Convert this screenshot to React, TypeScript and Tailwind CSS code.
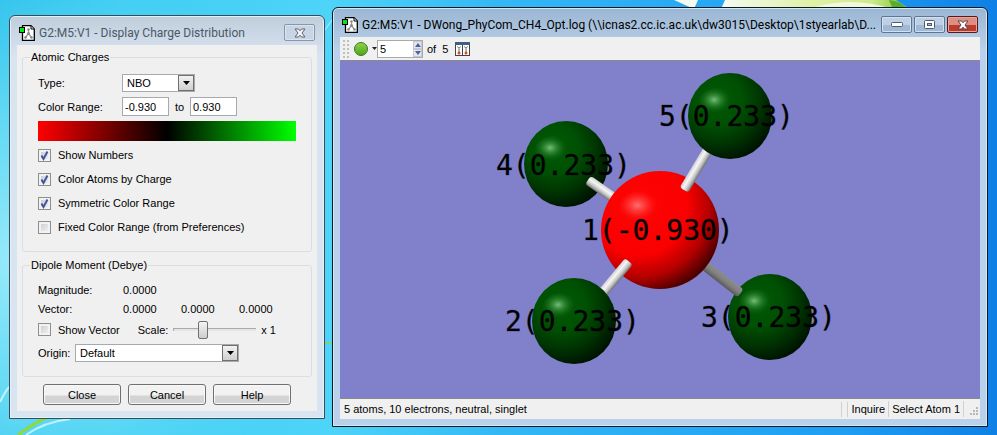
import { useState } from "react";
import type { ReactNode } from "react";

const CHECKS = [
  { id: "show-numbers", label: "Show Numbers", checked: true },
  { id: "color-atoms", label: "Color Atoms by Charge", checked: true },
  { id: "symmetric", label: "Symmetric Color Range", checked: true },
  { id: "fixed", label: "Fixed Color Range (from Preferences)", checked: false },
];

const LABELS = [
  { text: "5(0.233)", x: 319, y: 65 },
  { text: "4(0.233)", x: 156, y: 114 },
  { text: "1(-0.930)", x: 242, y: 179 },
  { text: "2(0.233)", x: 165, y: 270 },
  { text: "3(0.233)", x: 361, y: 266 },
];

function Wallpaper() {
  return (
    <svg className="absolute inset-0 h-full w-full" viewBox="0 0 997 435" preserveAspectRatio="none" aria-hidden="true">
      <defs>
        <linearGradient id="sky" x1="0" y1="0" x2="1" y2="0">
          <stop offset="0" stopColor="#2cc0ea" />
          <stop offset="0.12" stopColor="#3fcdf2" />
          <stop offset="0.33" stopColor="#4ed4f8" />
          <stop offset="0.5" stopColor="#33b8f5" />
          <stop offset="0.85" stopColor="#1e9df3" />
          <stop offset="1" stopColor="#0f80e6" />
        </linearGradient>
        <radialGradient id="glow" gradientUnits="userSpaceOnUse" cx="20" cy="260" r="310">
          <stop offset="0" stopColor="#a5f0fb" stopOpacity="0.9" />
          <stop offset="0.5" stopColor="#7fe6fa" stopOpacity="0.6" />
          <stop offset="1" stopColor="#5cd8fa" stopOpacity="0" />
        </radialGradient>
        <linearGradient id="leaf" x1="0" y1="0" x2="1" y2="0">
          <stop offset="0" stopColor="#f4fbf2" />
          <stop offset="0.5" stopColor="#dff0a4" />
          <stop offset="0.8" stopColor="#cfe98c" />
          <stop offset="1" stopColor="#6fbf2e" />
        </linearGradient>
      </defs>
      <rect width="997" height="435" fill="url(#sky)" />
      <rect width="997" height="435" fill="url(#glow)" />
      <path d="M674 0h24l-4 9z" fill="#f4faf0" />
      <path d="M725 0H896l14 9H721z" fill="url(#leaf)" />
      <path d="M808 9q42-14 84 0z" fill="#f1f8dc" />
      <path d="M889 0q12 1 18 9h-14z" fill="#58ad2d" />
      <path d="M322 34q10-14 17-24" stroke="#b4f0fc" fill="none" />
      <path d="M0 402q6-12 10-16M26 435q18-13 44-16" stroke="#bdf4fb" strokeWidth="2" fill="none" />
      <path d="M18 435q16-12 30-18" stroke="#8ed840" strokeWidth="3" fill="none" />
      <path d="M324 343h9" stroke="#7cd08a" strokeWidth="2" />
    </svg>
  );
}

function AppIcon() {
  return (
    <svg className="size-4 shrink-0" viewBox="0 0 16 16" aria-hidden="true">
      <path d="M3.500.700h8.500l3.300 3.300v11.300H3.500z" fill="#fff" stroke="#000" strokeWidth="1.300" />
      <path d="M12 1v3h3" fill="#fff" stroke="#000" />
      <path d="M9.500 4v4.500L6.500 12.500M9.500 8.500l3 4" stroke="#9a9a9a" strokeWidth="1.300" fill="none" />
      <circle cx="9.500" cy="4.500" r="1.200" fill="#888" />
      <circle cx="9.500" cy="8.500" r="1.500" fill="#888" />
      <circle cx="6.500" cy="12.500" r="1.300" fill="#888" />
      <circle cx="12.500" cy="12.500" r="1.300" fill="#888" />
      <rect x="0.500" y="2.500" width="5" height="5" fill="#00e810" stroke="#000" />
    </svg>
  );
}

function CloseGlyph({ fill, stroke }: { fill: string; stroke: string }) {
  return (
    <svg className="h-[10px] w-3" viewBox="0 0 12 10" aria-hidden="true">
      <path
        d="M1 1h3.500L6 2.800 7.500 1H11L8 5l3 4H7.500L6 7.200 4.500 9H1l3-4z"
        fill={fill}
        stroke={stroke}
        strokeLinejoin="round"
      />
    </svg>
  );
}

function Check({ id, label, checked }: { id: string; label: string; checked: boolean }) {
  return (
    <div className="flex items-center gap-[7px]">
      <span className="relative size-[13px] shrink-0">
        <input
          id={id}
          type="checkbox"
          defaultChecked={checked}
          className="peer block size-[13px] appearance-none border border-[#8e8f8f] bg-linear-to-br from-[#c4c9d0] to-[#f6f6f6] shadow-[inset_0_0_0_2px_#f2f2f2]"
        />
        <svg className="pointer-events-none absolute inset-0 hidden peer-checked:block" viewBox="0 0 13 13" aria-hidden="true">
          <path d="M3.500 6.500l2 3.500 4-7.500" stroke="#43549b" strokeWidth="2" fill="none" />
        </svg>
      </span>
      <label htmlFor={id}>{label}</label>
    </div>
  );
}

function Combo({ id, options, className }: { id: string; options: string[]; className: string }) {
  return (
    <div className={`relative h-[18px] border border-[#a5a9b0] bg-white ${className}`}>
      <select id={id} className="block h-4 w-full appearance-none bg-white pr-4 pl-1 leading-4 outline-none">
        {options.map((o) => (
          <option key={o}>{o}</option>
        ))}
      </select>
      <span className="pointer-events-none absolute inset-y-0 right-0 flex w-4 items-center justify-center border border-[#707070] bg-linear-to-b from-[#f2f2f2] to-[#cfcfcf]">
        <svg className="h-1 w-[7px]" viewBox="0 0 7 4" aria-hidden="true">
          <path d="M0 0h7L3.500 4z" fill="#000" />
        </svg>
      </span>
    </div>
  );
}

function Group({ title, className, children }: { title: string; className: string; children: ReactNode }) {
  return (
    <fieldset className={`rounded-[3px] border border-[#d5dfe5] pr-[15px] pl-[15px] ${className}`}>
      <legend className="-ml-2 px-[1px] leading-4">{title}</legend>
      {children}
    </fieldset>
  );
}

function ChargeDialog() {
  return (
    <section className="mt-2 w-[316px] shrink-0 self-start rounded-t-md border border-[#3c4a57] bg-linear-to-b from-[#bfcddb] to-[#d9e4f1] to-10% px-[7px] pb-[7px] shadow-[inset_0_0_0_1px_#e6f0f8]">
      <header className="flex h-[29px] items-center gap-1 pt-1 pl-[2px]">
        <AppIcon />
        <h1 className="flex-1 truncate font-[Roboto,sans-serif] text-[12px] text-[#4b5868]">
          G2:M5:V1 - Display Charge Distribution
        </h1>
        <button
          aria-label="Close window"
          className="mr-[2px] flex h-[17px] w-[31px] items-center justify-center rounded-[2px] border border-[#8796ab] bg-[#c8d5e4] shadow-[inset_0_0_0_1px_#dbe5ef]"
        >
          <CloseGlyph fill="#f4f4f4" stroke="#5c6371" />
        </button>
      </header>

      <div className="bg-[#f0f0f0] px-[5px] pt-1 pb-[6px]">
        <Group title="Atomic Charges" className="pb-3">
          <div className="mt-[9px] flex items-center">
            <label htmlFor="type" className="w-[84px] shrink-0">Type:</label>
            <Combo id="type" options={["NBO", "Mulliken", "APT"]} className="w-[73px]" />
          </div>
          <div className="mt-[5px] flex items-center">
            <label htmlFor="range-min" className="w-[84px] shrink-0">Color Range:</label>
            <input id="range-min" defaultValue="-0.930" className="h-[19px] w-[47px] border border-[#a5a9b0] bg-white px-[2px]" />
            <label htmlFor="range-max" className="w-[21px] text-center">to</label>
            <input id="range-max" defaultValue="0.930" className="h-[19px] w-[47px] border border-[#a5a9b0] bg-white px-[2px]" />
          </div>
          <div className="mt-[5px] mb-[2px] h-5 bg-linear-to-r/srgb from-[#ff0000] via-black to-[#00ff00]" />
          {CHECKS.map((c) => (
            <div key={c.id} className="flex h-6 items-center">
              <Check {...c} />
            </div>
          ))}
        </Group>

        <Group title="Dipole Moment (Debye)" className="mt-[5px] pb-[14px]">
          <dl className="mt-[7px]">
            <div className="flex h-[19px] items-center">
              <dt className="w-[85px]">Magnitude:</dt>
              <dd>0.0000</dd>
            </div>
            <div className="flex h-[19px] items-center">
              <dt className="w-[85px]">Vector:</dt>
              <dd className="w-[58px]">0.0000</dd>
              <dd className="w-[58px]">0.0000</dd>
              <dd>0.0000</dd>
            </div>
          </dl>
          <div className="flex h-[23px] items-center">
            <Check id="show-vector" label="Show Vector" checked={false} />
            <label htmlFor="scale" className="ml-auto">Scale:</label>
            <input
              id="scale"
              type="range"
              min={0}
              max={100}
              defaultValue={33}
              className="mx-[5px] h-[18px] w-[83px] appearance-none bg-transparent [&::-webkit-slider-runnable-track]:h-[3px] [&::-webkit-slider-runnable-track]:border-t [&::-webkit-slider-runnable-track]:border-l [&::-webkit-slider-runnable-track]:border-[#a9a9a9] [&::-webkit-slider-runnable-track]:bg-[#e4e6e6] [&::-webkit-slider-thumb]:-mt-2 [&::-webkit-slider-thumb]:h-[18px] [&::-webkit-slider-thumb]:w-[10px] [&::-webkit-slider-thumb]:appearance-none [&::-webkit-slider-thumb]:rounded-[2px] [&::-webkit-slider-thumb]:border [&::-webkit-slider-thumb]:border-[#707070] [&::-webkit-slider-thumb]:bg-linear-to-b [&::-webkit-slider-thumb]:from-[#f4f4f4] [&::-webkit-slider-thumb]:to-[#cdcdcd]"
            />
            <output htmlFor="scale" className="mr-5">x 1</output>
          </div>
          <div className="mt-[3px] flex items-center">
            <label htmlFor="origin" className="w-[37px] shrink-0">Origin:</label>
            <Combo id="origin" options={["Default"]} className="w-[164px]" />
          </div>
        </Group>

        <div className="mt-[7px] flex justify-center gap-[7px]">
          {["Close", "Cancel", "Help"].map((name) => (
            <button
              key={name}
              className="h-[21px] w-[78px] rounded-[3px] border border-[#707070] bg-linear-to-b from-[#f2f2f2] from-50% to-[#d4d4d4] to-60% shadow-[inset_0_0_0_1px_#f8f8f8]"
            >
              {name}
            </button>
          ))}
        </div>
      </div>
    </section>
  );
}

function Bond({ x, y, length, angle, dark }: { x: number; y: number; length: number; angle: number; dark?: boolean }) {
  return (
    <rect
      x="0"
      y="-5"
      width={length}
      height="10"
      rx="3"
      fill={dark ? "url(#bond-dark)" : "url(#bond)"}
      transform={`translate(${x} ${y}) rotate(${angle})`}
    />
  );
}

function Hydrogen({ cx, cy }: { cx: number; cy: number }) {
  return (
    <g>
      <ellipse cx={cx} cy={cy} rx="42" ry="43" fill="url(#green)" />
      <ellipse cx={cx - 13} cy={cy - 14} rx="18" ry="14" fill="url(#shine-green)" />
    </g>
  );
}

function Molecule() {
  return (
    <svg className="block w-full flex-1 bg-[#8080cb]" viewBox="0 0 640 337" role="img" aria-label="CH4 molecule with atomic charges">
      <defs>
        <radialGradient id="green" cx="0.36" cy="0.32" r="0.72">
          <stop offset="0" stopColor="#005a04" />
          <stop offset="0.4" stopColor="#005003" />
          <stop offset="0.7" stopColor="#003402" />
          <stop offset="1" stopColor="#001200" />
        </radialGradient>
        <radialGradient id="red" cx="0.32" cy="0.3" r="0.75">
          <stop offset="0" stopColor="#ff0404" />
          <stop offset="0.55" stopColor="#fb0000" />
          <stop offset="0.8" stopColor="#b40000" />
          <stop offset="1" stopColor="#4c0000" />
        </radialGradient>
        <radialGradient id="shine-green" cx="0.42" cy="0.42">
          <stop offset="0" stopColor="#74c076" />
          <stop offset="0.4" stopColor="#3a8e3d" stopOpacity="0.7" />
          <stop offset="1" stopColor="#005a04" stopOpacity="0" />
        </radialGradient>
        <radialGradient id="shine-red" cx="0.42" cy="0.42">
          <stop offset="0" stopColor="#ff7070" />
          <stop offset="0.5" stopColor="#ff3a3a" stopOpacity="0.6" />
          <stop offset="1" stopColor="#ff0000" stopOpacity="0" />
        </radialGradient>
        <linearGradient id="bond" x1="0" y1="0" x2="0" y2="1">
          <stop offset="0" stopColor="#d0d0d0" />
          <stop offset="0.35" stopColor="#f6f6f6" />
          <stop offset="0.7" stopColor="#c2c2c2" />
          <stop offset="1" stopColor="#707070" />
        </linearGradient>
        <linearGradient id="bond-dark" x1="0" y1="0" x2="0" y2="1">
          <stop offset="0" stopColor="#8c8c8c" />
          <stop offset="0.5" stopColor="#808080" />
          <stop offset="1" stopColor="#585858" />
        </linearGradient>
      </defs>
      <Hydrogen cx={226} cy={103} />
      <Hydrogen cx={430} cy={256} />
      <Bond x={248} y={119} length={45} angle={35} />
      <Bond x={350} y={193} length={64} angle={38} dark />
      <circle cx="320" cy="169" r="59" fill="url(#red)" />
      <ellipse cx="301" cy="147" rx="22" ry="17" fill="url(#shine-red)" />
      <Bond x={344} y={129} length={55} angle={-59} />
      <Bond x={260} y={235} length={45} angle={-50} />
      <Hydrogen cx={390} cy={55} />
      <Hydrogen cx={234} cy={260} />
      <g className="font-['DejaVu_Sans_Mono',monospace] text-[28px]" fill="#000" stroke="#000" strokeOpacity="0.25">
        {LABELS.map((l) => (
          <text key={l.text} x={l.x} y={l.y}>
            {l.text}
          </text>
        ))}
      </g>
    </svg>
  );
}

const CAPTION_BUTTON =
  "flex h-[17px] w-[31px] shrink-0 items-center justify-center rounded-[2px] border border-[#5f7794] bg-linear-to-b from-[#bdd0e5] from-50% to-[#9fb9d6] to-50% shadow-[inset_0_0_0_1px_#d3e1ef]";

function ViewWindow() {
  const [frame, setFrame] = useState(5);
  return (
    <section className="flex min-w-0 flex-1 flex-col rounded-t-md border border-[#0c1822] bg-linear-to-b from-[#9bb6d3] to-[#b9d1ea] to-10% px-[7px] pb-[7px] shadow-[inset_0_0_0_1px_#cfeaf6]">
      <header className="flex h-[29px] shrink-0 items-center gap-[2px] pt-1 pr-[2px] pl-[2px]">
        <AppIcon />
        <h1 className="ml-[2px] flex-1 truncate font-[Roboto,sans-serif] text-[12px] text-black">
          G2:M5:V1 - DWong_PhyCom_CH4_Opt.log (\\icnas2.cc.ic.ac.uk\dw3015\Desktop\1styearlab\D...
        </h1>
        <button aria-label="Minimize" className={CAPTION_BUTTON}>
          <svg className="h-[5px] w-3" viewBox="0 0 12 5" aria-hidden="true">
            <rect x="0.500" y="0.500" width="11" height="4" rx="1" fill="#fff" stroke="#4d5a6b" />
          </svg>
        </button>
        <button aria-label="Maximize" className={CAPTION_BUTTON}>
          <svg className="h-[9px] w-[11px]" viewBox="0 0 11 9" aria-hidden="true">
            <rect x="0.500" y="0.500" width="10" height="8" rx="1" fill="#fff" stroke="#4d5a6b" />
            <rect x="3.500" y="3.500" width="4" height="2" fill="#a9bfd8" stroke="#4d5a6b" />
          </svg>
        </button>
        <button
          aria-label="Close"
          className="flex h-[17px] w-[31px] shrink-0 items-center justify-center rounded-[2px] border border-[#5a1a1a] bg-linear-to-b from-[#dd8f84] from-50% to-[#bf3a28] to-50% shadow-[inset_0_0_0_1px_#e5a79d]"
        >
          <CloseGlyph fill="#fff" stroke="#55424a" />
        </button>
      </header>

      <div className="flex h-6 shrink-0 items-center border-b border-[#8a8a8a] bg-[#f0f0f0] pl-[3px]">
        <svg className="h-[18px] w-[6px]" viewBox="0 0 6 18" fill="#c0c0c0" aria-hidden="true">
          {[0, 4, 8, 12, 16].map((y) => (
            <g key={y}>
              <rect x="0" y={y} width="2" height="2" />
              <rect x="4" y={y} width="2" height="2" />
            </g>
          ))}
        </svg>
        <button aria-label="Playback" className="ml-[5px] flex items-center gap-1">
          <svg className="size-[14px]" viewBox="0 0 14 14" aria-hidden="true">
            <defs>
              <linearGradient id="play" x1="0" y1="0" x2="0" y2="1">
                <stop offset="0" stopColor="#8fd64c" />
                <stop offset="1" stopColor="#4ba318" />
              </linearGradient>
            </defs>
            <circle cx="7" cy="7" r="6.500" fill="url(#play)" stroke="#3e7a22" />
          </svg>
          <svg className="h-[3px] w-[5px]" viewBox="0 0 5 3" aria-hidden="true">
            <path d="M0 0h5L2.500 3z" fill="#222" />
          </svg>
        </button>
        <div className="flex h-[18px] w-[46px] border border-[#a5a9b0] bg-white">
          <input
            aria-label="Frame"
            value={frame}
            onChange={(e) => setFrame(Number(e.target.value) || 1)}
            className="w-0 flex-1 bg-white pl-[2px] outline-none"
          />
          <div className="flex w-[9px] flex-col bg-[#e3e6ee]">
            <button aria-label="Next frame" onClick={() => setFrame(Math.min(5, frame + 1))} className="flex flex-1 items-center justify-center border border-[#c3c8d4]">
              <svg className="h-1 w-[6px]" viewBox="0 0 6 4" aria-hidden="true">
                <path d="M0 4h6L3 0z" fill="#4d619b" />
              </svg>
            </button>
            <button aria-label="Previous frame" onClick={() => setFrame(Math.max(1, frame - 1))} className="flex flex-1 items-center justify-center border border-[#c3c8d4]">
              <svg className="h-1 w-[6px]" viewBox="0 0 6 4" aria-hidden="true">
                <path d="M0 0h6L3 4z" fill="#4d619b" />
              </svg>
            </button>
          </div>
        </div>
        <span className="ml-1">of</span>
        <span className="ml-[6px]">5</span>
        <button aria-label="View multiple" className="ml-[7px]">
          <svg className="block h-[14px] w-[15px]" viewBox="0 0 15 14" aria-hidden="true">
            <rect x="0.500" y="0.500" width="14" height="13" fill="#fff" stroke="#444" />
            <rect x="0" y="0" width="15" height="3" fill="#3f5f85" />
            <path d="M7.500 3v11" stroke="#444" />
            <path d="M2.500 4.500L4 6.500l1.500-2M4 7v3M9.500 4.500l1.500 2 1.500-2M11 7v3" stroke="#666" fill="none" />
            <circle cx="4" cy="11" r="1.500" fill="#dd4a1e" />
            <circle cx="11" cy="11" r="1.500" fill="#dd4a1e" />
          </svg>
        </button>
      </div>

      <Molecule />

      <footer className="flex h-[21px] shrink-0 items-center border-t border-[#8a8a8a] bg-[#f0f0f0] pl-1">
        <p className="flex-1 truncate">5 atoms, 10 electrons, neutral, singlet</p>
        <span className="h-[15px] w-[7px] border-x border-[#d0d0d0]" />
        <span className="border-r border-[#d0d0d0] px-[3px]">Inquire</span>
        <span className="border-r border-[#d0d0d0] px-[3px]">Select Atom 1</span>
        <svg className="mt-1 mr-[2px] ml-[6px] size-2" viewBox="0 0 8 8" fill="#b8b8b8" aria-hidden="true">
          <path d="M6 0h2v2H6zM3 3h2v2H3zM6 3h2v2H6zM0 6h2v2H0zM3 6h2v2H3zM6 6h2v2H6z" />
        </svg>
      </footer>
    </section>
  );
}

export default function App() {
  return (
    <main className="relative min-h-screen bg-[#38bdf5] font-['Liberation_Sans',Arial,sans-serif] text-[11px] leading-4 text-black">
      <Wallpaper />
      <div className="relative flex min-h-screen gap-[7px] px-[9px] pt-[7px] pb-2">
        <ChargeDialog />
        <ViewWindow />
      </div>
    </main>
  );
}
